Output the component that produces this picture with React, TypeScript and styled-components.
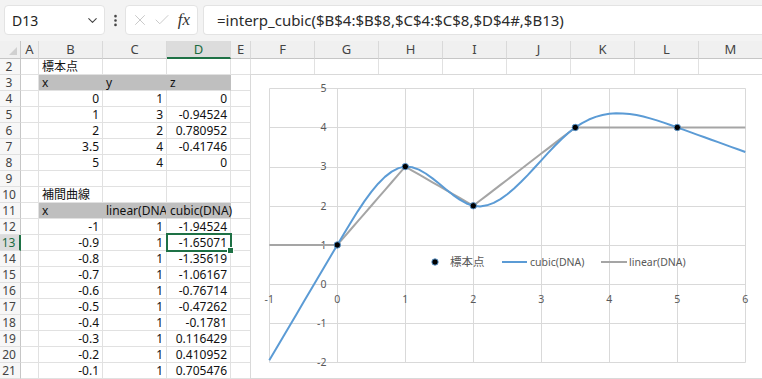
import React from 'react'
import styled, { createGlobalStyle } from 'styled-components'
import { ChevronDown, EllipsisVertical, X, Check } from 'lucide-react'

const GlobalStyle = createGlobalStyle`
    html, body {
        margin: 0;
        padding: 0;
        background: #fff;
        overflow: hidden;
    }
    body {
        font-family: "Noto Sans", "Noto Sans CJK JP", sans-serif;
    }
`

const Page = styled.div`
    width: 762px;
    height: 379px;
    overflow: hidden;
    display: flex;
    flex-direction: column;
    background: #fff;
`

const FormulaBar = styled.div`
    height: 41px;
    flex: none;
    box-sizing: border-box;
    background: #f3f3f3;
    display: flex;
    align-items: flex-start;
    padding: 5px 0 0 4px;
`

const Box = styled.div`
    height: 30px;
    box-sizing: border-box;
    background: #fff;
    border: 1px solid #e3e3e3;
    border-radius: 4px;
    display: flex;
    align-items: center;
`

const NameBox = styled(Box)`
    width: 101px;
    justify-content: space-between;
    padding: 0 4px 0 7px;
    font-size: 14px;
    color: #222;
`

const Grip = styled.div`
    width: 20px;
    height: 30px;
    display: flex;
    align-items: center;
    justify-content: center;
    color: #444;
`

const FnBox = styled(Box)`
    width: 73px;
    padding-left: 5px;
    gap: 4px;
    color: #c4c4c4;
`

const Fx = styled.span`
    font-family: "Liberation Serif", "DejaVu Serif", serif;
    font-style: italic;
    font-size: 17px;
    color: #333;
    width: 18px;
    text-align: center;
`

const FormulaBox = styled(Box)`
    flex: 1;
    margin-left: 5px;
    border-right: none;
    border-radius: 4px 0 0 4px;
    padding-left: 13px;
    font-size: 15px;
    color: #2b2b2b;
    white-space: nowrap;
`

const Sheet = styled.div`
    position: relative;
    flex: 1;
    display: grid;
    grid-template-columns: 21px 18px 64px 64px 64px 20px repeat(8, 64px);
    grid-template-rows: 18px;
    grid-auto-rows: 16px;
    overflow: hidden;
    font-size: 12px;
    color: #111;
`

const Corner = styled.div`
    background: #f0f0f0;
    border-right: 1px solid #c6c6c6;
    border-bottom: 1px solid #c6c6c6;
    box-sizing: border-box;
    display: flex;
    align-items: flex-end;
    justify-content: flex-end;
    padding: 0 3px 3px 0;

    &::after {
        content: '';
        width: 0;
        height: 0;
        border-left: 8px solid transparent;
        border-bottom: 8px solid #d0d0d0;
    }
`

const ColHead = styled.div<{ $active?: boolean }>`
    box-sizing: border-box;
    background: ${p => p.$active ? '#dcdcdc' : '#f0f0f0'};
    border-right: 1px solid #d9d9d9;
    border-bottom: ${p => p.$active ? '2px solid #1e7145' : '1px solid #c6c6c6'};
    color: ${p => p.$active ? '#1b6b3f' : '#444'};
    font-size: 13px;
    line-height: 17px;
    text-align: center;
`

const RowHead = styled.div<{ $active?: boolean }>`
    box-sizing: border-box;
    background: ${p => p.$active ? '#dcdcdc' : '#f7f7f7'};
    border-right: ${p => p.$active ? '2px solid #1e7145' : '1px solid #c6c6c6'};
    border-bottom: 1px solid #e0e0e0;
    color: ${p => p.$active ? '#1b6b3f' : '#444'};
    font-size: 12px;
    line-height: 15px;
    text-align: center;
    padding-right: 2px;
`

const Cell = styled.div<{ $right?: boolean; $fill?: boolean; $spill?: boolean; $selected?: boolean }>`
    box-sizing: border-box;
    position: ${p => p.$selected ? 'relative' : 'static'};
    background: ${p => p.$fill ? '#bfbfbf' : 'transparent'};
    border-right: 1px solid ${p => p.$fill ? '#bfbfbf' : '#e1e1e1'};
    border-bottom: 1px solid #e1e1e1;
    padding: 0 3px;
    line-height: 15px;
    white-space: nowrap;
    text-align: ${p => p.$right ? 'right' : 'left'};
    overflow: ${p => p.$spill || p.$selected ? 'visible' : 'hidden'};

    &::after {
        display: ${p => p.$selected ? 'block' : 'none'};
        content: '';
        position: absolute;
        inset: -2px -2px -2px -1px;
        border: 2px solid #1e7145;
    }

    &::before {
        display: ${p => p.$selected ? 'block' : 'none'};
        content: '';
        position: absolute;
        right: -4px;
        bottom: -4px;
        width: 5px;
        height: 5px;
        background: #1e7145;
        border: 1px solid #fff;
        z-index: 1;
    }
`

const ChartFrame = styled.div`
    position: absolute;
    left: 250px;
    top: 33px;
    width: 540px;
    height: 305px;
    box-sizing: border-box;
    background: #fff;
    border: 1px solid #d9d9d9;

    svg {
        display: block;
        font-family: "Noto Sans", "Noto Sans CJK JP", sans-serif;
    }
`

const COLS = ['A', 'B', 'C', 'D', 'E', 'F', 'G', 'H', 'I', 'J', 'K', 'L', 'M']

const cubicVals = ['-1.94524', '-1.65071', '-1.35619', '-1.06167', '-0.76714', '-0.47262', '-0.1781', '0.116429', '0.410952', '0.705476']

const rows: Record<number, string[]> = {
    2: ['標本点'],
    3: ['x', 'y', 'z'],
    4: ['0', '1', '0'],
    5: ['1', '3', '-0.94524'],
    6: ['2', '2', '0.780952'],
    7: ['3.5', '4', '-0.41746'],
    8: ['5', '4', '0'],
    10: ['補間曲線'],
    11: ['x', 'linear(DNA)', 'cubic(DNA)'],
}
cubicVals.forEach((v, i) => {
    rows[12 + i] = [String(-(10 - i) / 10), '1', v]
})

const filled = [3, 11]

// sample points and interpolants
const KX = [0, 1, 2, 3.5, 5]
const KY = [1, 3, 2, 4, 4]
const KZ = [0, -0.94524, 0.780952, -0.41746, 0]

const cubic = (x: number) => {
    if (x < 0) return 1 + 2.94524 * x
    if (x > 5) return 4 - 0.62619 * (x - 5)
    let i = 0
    while (i < 3 && x > KX[i + 1]) i++
    const h = KX[i + 1] - KX[i]
    const a = KX[i + 1] - x
    const b = x - KX[i]
    return KZ[i] * a ** 3 / h + KZ[i + 1] * b ** 3 / h + (KY[i] / h - KZ[i] * h) * a + (KY[i + 1] / h - KZ[i + 1] * h) * b
}

const linear = (x: number) => {
    if (x <= 0) return 1
    if (x >= 5) return 4
    let i = 0
    while (i < 3 && x > KX[i + 1]) i++
    const t = (x - KX[i]) / (KX[i + 1] - KX[i])
    return KY[i] + (KY[i + 1] - KY[i]) * t
}

const px = (x: number) => 18.3 + (x + 1) * 68
const py = (y: number) => 13.3 + (5 - y) * 39.16
const crisp = (v: number) => Math.round(v) + 0.5

const xs = Array.from({ length: 71 }, (_, i) => -1 + i / 10)
const toPoints = (f: (x: number) => number) => xs.map(x => `${px(x).toFixed(2)},${py(f(x)).toFixed(2)}`).join(' ')

const Chart = () => {
    const xTicks = [-1, 0, 1, 2, 3, 4, 5, 6]
    const yTicks = [-2, -1, 0, 1, 2, 3, 4, 5]
    const left = crisp(px(-1))
    const right = crisp(px(6))
    const top = crisp(py(5))
    const bottom = crisp(py(-2))
    const legendY = 187

    return (
        <ChartFrame>
            <svg width={538} height={303}>
                {xTicks.map(t => (
                    <line key={'vx' + t} x1={crisp(px(t))} x2={crisp(px(t))} y1={top} y2={bottom} stroke="#d9d9d9" />
                ))}
                {yTicks.map(t => (
                    <line key={'hy' + t} x1={left} x2={right} y1={crisp(py(t))} y2={crisp(py(t))} stroke="#d9d9d9" />
                ))}
                {yTicks.map(t => (
                    <text key={'ly' + t} x={75.5} y={py(t) + 3.8} fontSize={10.5} fill="#595959" textAnchor="end">{t}</text>
                ))}
                {xTicks.map(t => (
                    <text key={'lx' + t} x={px(t)} y={py(0) + 19} fontSize={10.5} fill="#595959" textAnchor="middle">{t}</text>
                ))}

                <polyline points={toPoints(linear)} fill="none" stroke="#a5a5a5" strokeWidth={2} strokeLinejoin="round" />
                <polyline points={toPoints(cubic)} fill="none" stroke="#5b9bd5" strokeWidth={2} strokeLinejoin="round" />
                {KX.map((x, i) => (
                    <circle key={'m' + i} cx={px(x)} cy={py(KY[i])} r={3.2} fill="#000" stroke="#5b9bd5" strokeWidth={0.9} />
                ))}

                <circle cx={184} cy={legendY} r={3.2} fill="#000" stroke="#5b9bd5" strokeWidth={0.9} />
                <text x={199} y={legendY + 4} fontSize={11.5} fill="#595959">標本点</text>
                <line x1={251} x2={276} y1={legendY} y2={legendY} stroke="#5b9bd5" strokeWidth={2} />
                <text x={279} y={legendY + 4} fontSize={10.5} fill="#595959">cubic(DNA)</text>
                <line x1={350} x2={376} y1={legendY} y2={legendY} stroke="#a5a5a5" strokeWidth={2} />
                <text x={378} y={legendY + 4} fontSize={10.5} fill="#595959">linear(DNA)</text>
            </svg>
        </ChartFrame>
    )
}

const isNumber = (s: string) => /^-?[\d.]+$/.test(s)

const App = () => {
    const rowNums = Array.from({ length: 21 }, (_, i) => i + 2)

    return (
        <Page>
            <GlobalStyle />
            <FormulaBar>
                <NameBox>
                    <span>D13</span>
                    <ChevronDown size={15} strokeWidth={1.75} color="#444" />
                </NameBox>
                <Grip><EllipsisVertical size={15} strokeWidth={2.25} /></Grip>
                <FnBox>
                    <X size={18} strokeWidth={1.2} />
                    <Check size={18} strokeWidth={1.2} />
                    <Fx>fx</Fx>
                </FnBox>
                <FormulaBox>=interp_cubic($B$4:$B$8,$C$4:$C$8,$D$4#,$B13)</FormulaBox>
            </FormulaBar>

            <Sheet>
                <Corner />
                {COLS.map(c => <ColHead key={c} $active={c === 'D'}>{c}</ColHead>)}

                {rowNums.map(r => {
                    const vals = rows[r] || []
                    return (
                        <React.Fragment key={r}>
                            <RowHead $active={r === 13}>{r}</RowHead>
                            {COLS.map((c, ci) => {
                                const v = ci >= 1 && ci <= 3 ? vals[ci - 1] || '' : ''
                                const isFill = filled.includes(r) && ci >= 1 && ci <= 3
                                return (
                                    <Cell
                                        key={c}
                                        $right={isNumber(v)}
                                        $fill={isFill}
                                        $spill={r === 11 && c === 'D'}
                                        $selected={r === 13 && c === 'D'}
                                    >
                                        {v}
                                    </Cell>
                                )
                            })}
                        </React.Fragment>
                    )
                })}

                <Chart />
            </Sheet>
        </Page>
    )
}

export default App
